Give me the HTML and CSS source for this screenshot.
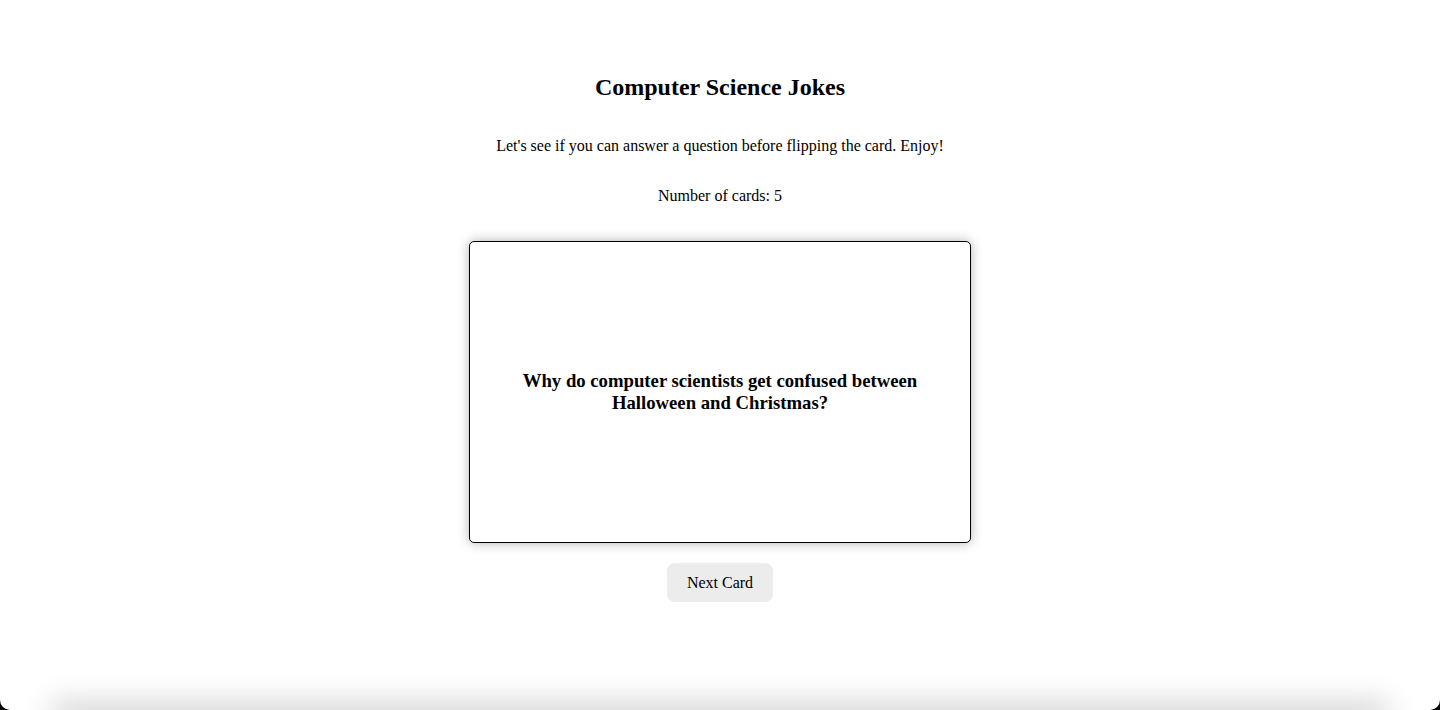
FILE: index.html
```html
<!DOCTYPE html>
<html lang="en">
<head>
  <meta charset="UTF-8" />
  <title>Computer Science Jokes</title>
  <link rel="stylesheet" href="styles.css">
</head>
<body>
  <div id="page">
    <h2 id="title">Computer Science Jokes</h2>
    <p id="intro">Let's see if you can answer a question before flipping the card. Enjoy!</p>
    <p id="count">Number of cards: 5</p>

    <div id="card">
      <h3 class="question">Why do computer scientists get confused between Halloween and Christmas?</h3>
    </div>

    <button id="nextButton">Next Card</button>

    <!-- sombra de abajo -->
    <div id="bottomShade"></div>
  </div>
</body>
</html>
```

FILE: styles.css
```css
html {
  background: #000;
}

body {
  margin: 0;
  font-family: "Liberation Serif", "Times New Roman", serif;
  color: #000;
}

#page {
  position: relative;
  height: 710px;
  overflow: hidden;
  background: #fff;
  border-radius: 0 0 10px 10px;
  display: flex;
  flex-direction: column;
  align-items: center;
  padding-top: 73px;
  box-sizing: border-box;
}

#title {
  margin: 0;
  font-size: 24px;
  line-height: 28px;
  font-weight: bold;
}

#intro {
  margin: 36px 0 0;
  font-size: 16px;
  line-height: 18px;
}

#count {
  margin: 32px 0 0;
  font-size: 16px;
  line-height: 18px;
}

#card {
  margin-top: 36px;
  width: 400px;
  height: 300px;
  padding: 0 50px;
  border: 1px solid #000;
  border-radius: 5px;
  box-shadow: 0 0 12px rgba(0, 0, 0, 0.3);
  display: flex;
  align-items: center;
  justify-content: center;
}

.question {
  margin: 0;
  font-size: 18.72px;
  line-height: 22px;
  font-weight: bold;
  text-align: center;
}

#nextButton {
  margin-top: 20px;
  padding: 10px 20px;
  font-family: inherit;
  font-size: 16px;
  line-height: 19px;
  background: #ececec;
  border: none;
  border-radius: 8px;
  color: #000;
  cursor: pointer;
}

#bottomShade {
  position: absolute;
  left: 60px;
  right: 60px;
  bottom: -10px;
  height: 10px;
  box-shadow: 0 0 30px 8px rgba(0, 0, 0, 0.18);
}
```
